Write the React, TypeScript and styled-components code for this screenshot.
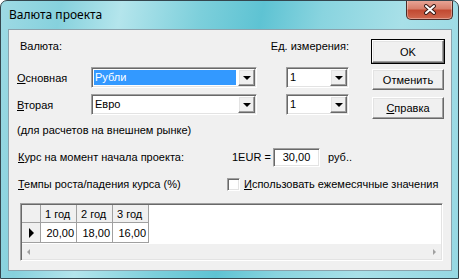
import React from 'react';
import styled, { createGlobalStyle } from 'styled-components';

const GlobalStyle = createGlobalStyle`
  html, body {
    margin: 0;
    padding: 0;
    background: #ffffff;
  }
  body {
    font-family: "Liberation Sans", Arial, sans-serif;
    font-size: 11px;
    color: #000000;
  }
  * {
    box-sizing: border-box;
  }
`;

const Window = styled.div`
  width: 459px;
  height: 279px;
  display: flex;
  flex-direction: column;
  border: 1px solid #34464e;
  border-radius: 7px 7px 0 0;
  overflow: hidden;
  background: linear-gradient(
    100deg,
    #9edae4 0%,
    #86d1dd 12%,
    #b4e5ec 24%,
    #7ccfdb 40%,
    #5ec3d3 52%,
    #89d4df 64%,
    #a8e0e8 80%,
    #96d8e3 100%
  );
`;

const TitleBar = styled.div`
  height: 28px;
  display: flex;
  align-items: flex-start;
`;

const Title = styled.div`
  font-family: "Noto Sans", "Open Sans", sans-serif;
  font-size: 12px;
  line-height: 16px;
  padding: 6px 0 0 8px;
  color: #000000;
`;

const CloseButton = styled.div`
  margin: -1px 5px 0 auto;
  width: 47px;
  height: 20px;
  border: 1px solid #4b2b27;
  border-top: none;
  border-radius: 0 0 5px 5px;
  background: linear-gradient(#e9a89a 0%, #d8806c 45%, #c24a32 55%, #d0684f 100%);
  box-shadow: inset 0 0 0 1px rgba(255, 255, 255, 0.35);
  display: flex;
  align-items: center;
  justify-content: center;
`;

const Client = styled.div`
  flex: 1;
  margin: 0 6px 7px 7px;
  border: 1px solid #8ba2ac;
  background: #f0f0f0;
  padding: 10px 0 0 8px;
  display: flex;
  flex-direction: column;
`;

const Top = styled.div`
  display: flex;
  align-items: flex-start;
`;

const Form = styled.div`
  width: 332px;
  display: flex;
  flex-direction: column;
`;

const HeaderRow = styled.div`
  height: 12px;
  line-height: 12px;
  display: flex;
  justify-content: space-between;
  padding-left: 3px;
`;

const Row = styled.div<{ $mt: number; $h: number }>`
  margin-top: ${(p) => p.$mt}px;
  height: ${(p) => p.$h}px;
  display: flex;
  align-items: center;
`;

const Label = styled.span<{ $w: number; $pl?: number }>`
  width: ${(p) => p.$w}px;
  padding-left: ${(p) => p.$pl ?? 0}px;
  flex-shrink: 0;
  white-space: nowrap;
`;

const Note = styled.div`
  margin-top: 9px;
  line-height: 13px;
`;

const U = styled.span`
  text-decoration: underline;
  text-underline-offset: 1px;
`;

const sunken = `
  border-style: solid;
  border-width: 1px;
  border-color: #a0a0a0 #ffffff #ffffff #a0a0a0;
  box-shadow: inset 1px 1px 0 #696969, inset -1px -1px 0 #e3e3e3;
`;

const raised = `
  border-style: solid;
  border-width: 1px;
  border-color: #ffffff #696969 #696969 #ffffff;
  box-shadow: inset -1px -1px 0 #a0a0a0, inset 1px 1px 0 #e3e3e3;
  background: #f0f0f0;
`;

const ComboBox = styled.div<{ $w: number; $ml?: number }>`
  ${sunken}
  width: ${(p) => p.$w}px;
  height: 21px;
  margin-left: ${(p) => p.$ml ?? 0}px;
  background: #ffffff;
  display: flex;
  padding: 1px;
  flex-shrink: 0;
`;

const ComboText = styled.div<{ $selected?: boolean }>`
  flex: 1;
  margin: 1px 2px 1px 1px;
  padding-left: 1px;
  line-height: 15px;
  background: ${(p) => (p.$selected ? '#3399ff' : '#ffffff')};
  color: ${(p) => (p.$selected ? '#ffffff' : '#000000')};
  white-space: nowrap;
  overflow: hidden;
`;

const DropButton = styled.div`
  ${raised}
  width: 17px;
  height: 17px;
  display: flex;
  align-items: center;
  justify-content: center;
`;

const DownArrow = styled.span`
  width: 0;
  height: 0;
  border-left: 4px solid transparent;
  border-right: 4px solid transparent;
  border-top: 4px solid #000000;
`;

const Buttons = styled.div`
  margin-left: 23px;
  display: flex;
  flex-direction: column;
`;

const PushButton = styled.div<{ $h: number; $mt: number; $default?: boolean }>`
  width: 72px;
  height: ${(p) => p.$h}px;
  margin-top: ${(p) => p.$mt}px;
  outline: ${(p) => (p.$default ? '1px solid #000000' : 'none')};
  outline-offset: 0;
  ${raised}
  display: flex;
  align-items: center;
  justify-content: center;
`;

const RateInput = styled.div`
  ${sunken}
  width: 47px;
  height: 19px;
  margin-left: 4px;
  background: #ffffff;
  text-align: center;
  line-height: 17px;
`;

const Unit = styled.span`
  margin-left: 8px;
`;

const CheckBox = styled.span`
  ${sunken}
  width: 13px;
  height: 13px;
  background: #ffffff;
  flex-shrink: 0;
`;

const CheckLabel = styled.span`
  margin-left: 4px;
  white-space: nowrap;
`;

const DataGrid = styled.div`
  ${sunken}
  margin: 12px 0 0 3px;
  width: 423px;
  height: 58px;
  background: #ffffff;
  padding: 1px;
  display: flex;
  flex-direction: column;
`;

const GridRow = styled.div<{ $h: number }>`
  display: flex;
  height: ${(p) => p.$h}px;
`;

const Cell = styled.div<{ $w: number; $head?: boolean; $align?: string }>`
  width: ${(p) => p.$w}px;
  border-right: 1px solid #a0a0a0;
  border-bottom: 1px solid #a0a0a0;
  background: ${(p) => (p.$head ? '#f0f0f0' : '#ffffff')};
  text-align: ${(p) => p.$align ?? 'left'};
  padding: 0 2px 0 4px;
  display: flex;
  align-items: center;
  justify-content: ${(p) => (p.$align === 'right' ? 'flex-end' : p.$align === 'center' ? 'center' : 'flex-start')};
  white-space: nowrap;
`;

const RowPointer = styled.span`
  width: 0;
  height: 0;
  border-top: 5px solid transparent;
  border-bottom: 5px solid transparent;
  border-left: 5px solid #000000;
  margin-left: 3px;
`;

const ScrollBar = styled.div`
  margin-top: auto;
  height: 15px;
  background: #f0f0f0;
  display: flex;
  align-items: center;
  justify-content: space-between;
  padding: 0 5px;
`;

const ScrollArrow = styled.span<{ $dir: 'left' | 'right' }>`
  width: 0;
  height: 0;
  border-top: 3px solid transparent;
  border-bottom: 3px solid transparent;
  ${(p) => (p.$dir === 'left' ? 'border-right: 3px solid #a0a0a0;' : 'border-left: 3px solid #a0a0a0;')}
`;

const Combo: React.FC<{ w: number; ml?: number; text: string; selected?: boolean }> = ({
  w,
  ml,
  text,
  selected,
}) => (
  <ComboBox $w={w} $ml={ml}>
    <ComboText $selected={selected}>{text}</ComboText>
    <DropButton>
      <DownArrow />
    </DropButton>
  </ComboBox>
);

const years = [
  { head: '1 год', value: '20,00' },
  { head: '2 год', value: '18,00' },
  { head: '3 год', value: '16,00' },
];

const App: React.FC = () => {
  return (
    <>
      <GlobalStyle />
      <Window>
        <TitleBar>
          <Title>Валюта проекта</Title>
          <CloseButton>
            <svg width="14" height="11" viewBox="0 0 14 11">
              <path d="M3 2 L11 9 M11 2 L3 9" stroke="#3b1d18" strokeWidth="4" strokeLinecap="round" />
              <path d="M3 2 L11 9 M11 2 L3 9" stroke="#ffffff" strokeWidth="2" strokeLinecap="round" />
            </svg>
          </CloseButton>
        </TitleBar>
        <Client>
          <Top>
            <Form>
              <HeaderRow>
                <span>Валюта:</span>
                <span>Ед. измерения:</span>
              </HeaderRow>
              <Row $mt={15} $h={21}>
                <Label $w={74}>
                  <U>О</U>сновная
                </Label>
                <Combo w={166} text="Рубли" selected />
                <Combo w={63} ml={29} text="1" />
              </Row>
              <Row $mt={6} $h={21}>
                <Label $w={74}>
                  <U>В</U>торая
                </Label>
                <Combo w={166} text="Евро" />
                <Combo w={63} ml={29} text="1" />
              </Row>
              <Note>(для расчетов на внешнем рынке)</Note>
            </Form>
            <Buttons>
              <PushButton $h={23} $mt={0} $default>
                OK
              </PushButton>
              <PushButton $h={21} $mt={6}>
                Отменить
              </PushButton>
              <PushButton $h={22} $mt={7}>
                <span>
                  <U>С</U>правка
                </span>
              </PushButton>
            </Buttons>
          </Top>
          <Row $mt={10} $h={20}>
            <Label $w={215} $pl={1}>
              <U>К</U>урс на момент начала проекта:
            </Label>
            <Label $w={37}>1EUR =</Label>
            <RateInput>30,00</RateInput>
            <Unit>руб..</Unit>
          </Row>
          <Row $mt={10} $h={14}>
            <Label $w={210} $pl={1}>
              <U>Т</U>емпы роста/падения курса (%)
            </Label>
            <CheckBox />
            <CheckLabel>
              <U>И</U>спользовать ежемесячные значения
            </CheckLabel>
          </Row>
          <DataGrid>
            <GridRow $h={18}>
              <Cell $w={19} $head />
              {years.map((y) => (
                <Cell key={y.head} $w={36} $head>
                  {y.head}
                </Cell>
              ))}
            </GridRow>
            <GridRow $h={20}>
              <Cell $w={19} $head>
                <RowPointer />
              </Cell>
              {years.map((y) => (
                <Cell key={y.head} $w={36} $align="right">
                  {y.value}
                </Cell>
              ))}
            </GridRow>
            <ScrollBar>
              <ScrollArrow $dir="left" />
              <ScrollArrow $dir="right" />
            </ScrollBar>
          </DataGrid>
        </Client>
      </Window>
    </>
  );
};

export default App;
